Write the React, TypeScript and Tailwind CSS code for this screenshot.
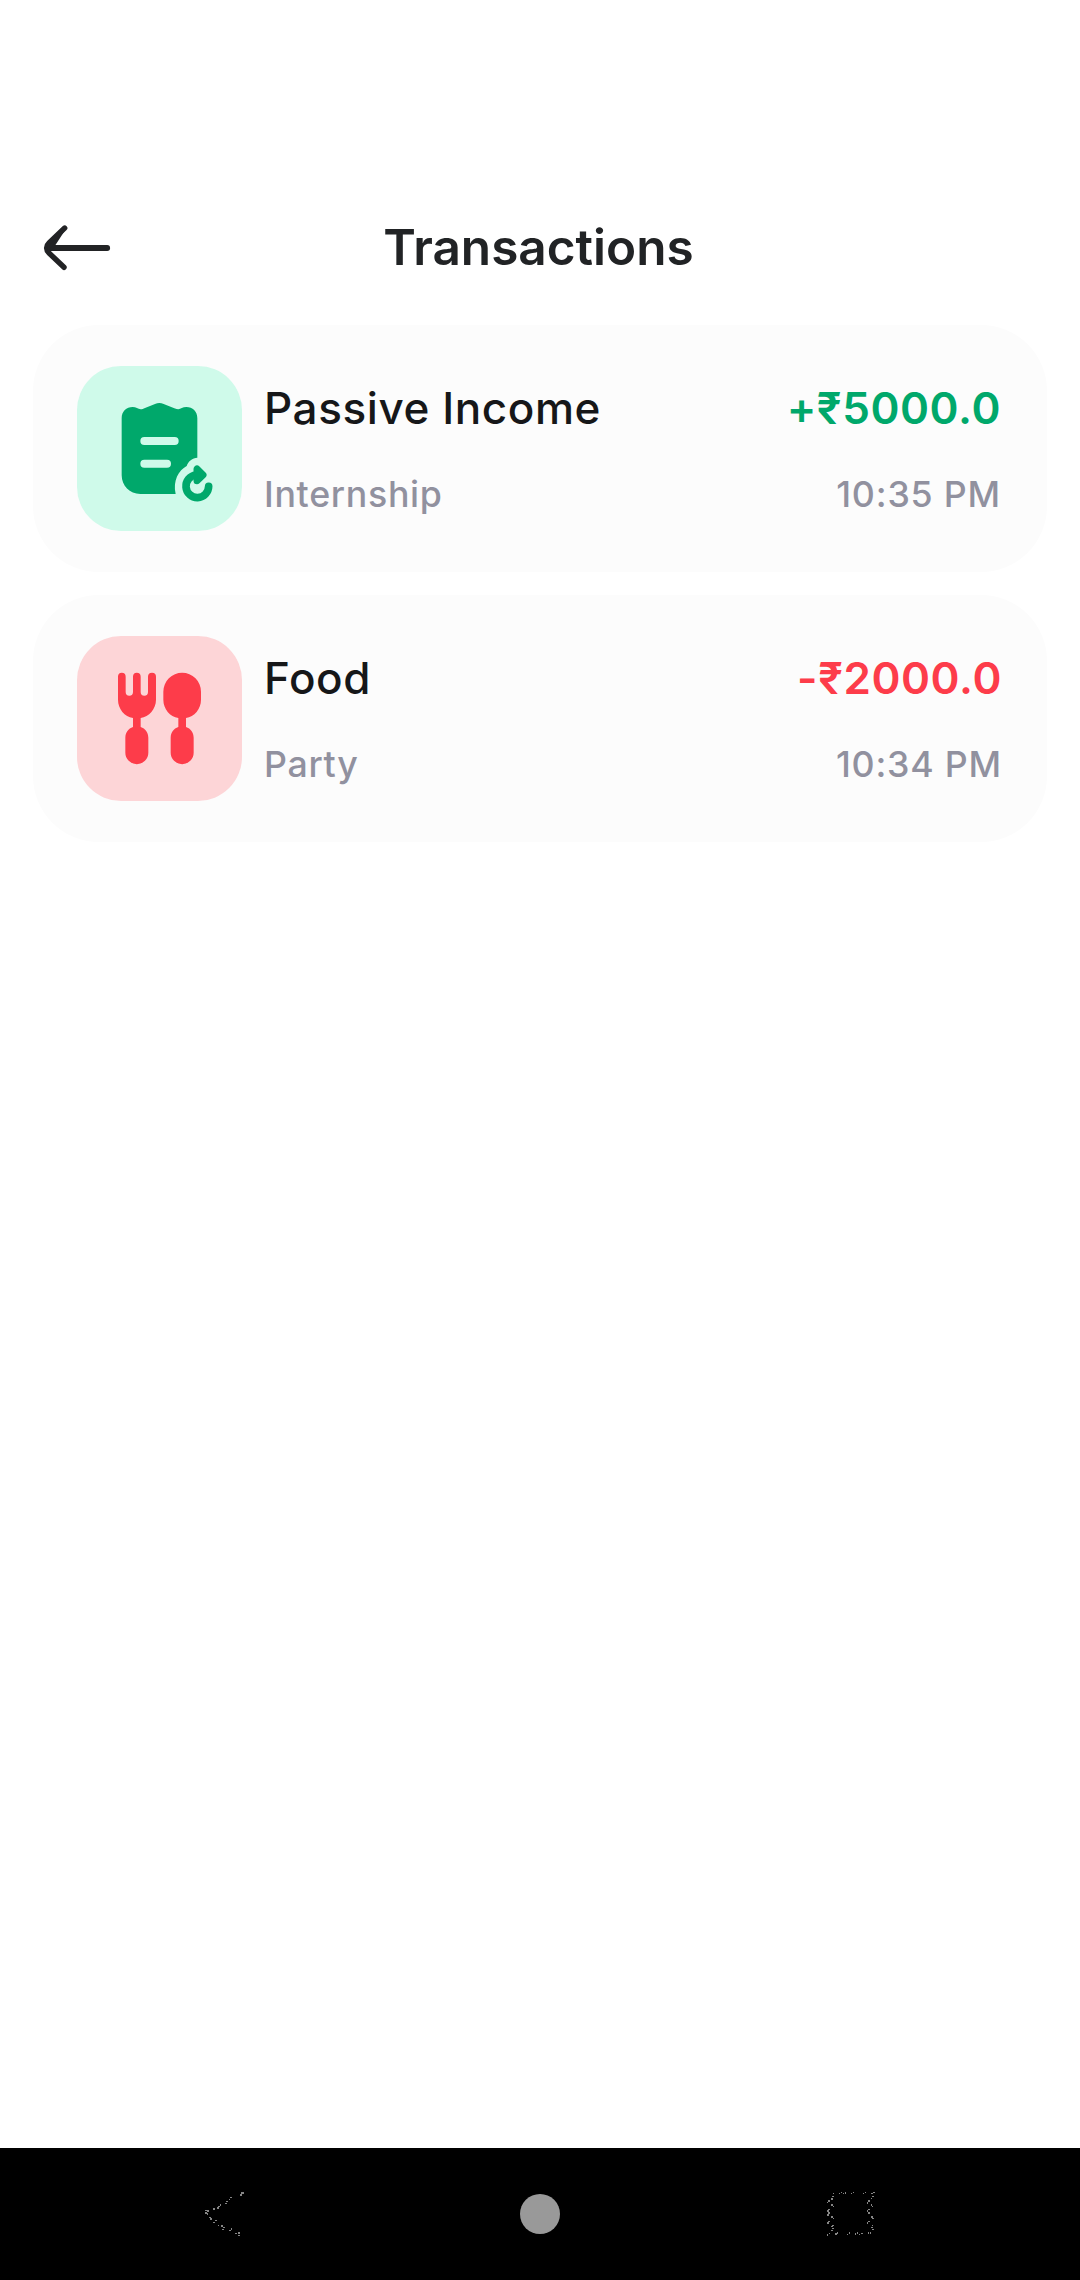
import React from "react";

function BackArrow() {
  return (
    <svg className="h-[50px] w-[72px]" viewBox="0 0 72 50" fill="none" stroke="#222325" strokeLinecap="round" strokeLinejoin="round">
      <path d="M8 25H66.2" strokeWidth="5.8" />
      <path d="M23.7 5L8 20C4.8 23 4.8 27 8 30L23 44.3" strokeWidth="5.4" />
      <path d="M23.7 6L8 21Q6 25 8 28L12 24Z" fill="#222325" strokeWidth="2" />
    </svg>
  );
}

function ReceiptIcon() {
  return (
    <svg className="h-[165px] w-[165px]" viewBox="21 18 495 495" fill="none">
      <path
        d="M155 175C155 154 169 141 188 141C198 141 204 147 212 148C216 148 220 146 225 144L255 132Q268 126 281 132L313 145C318 147 322 148 325 148C332 146 338 141 349 141C368 141 382 154 382 175V293C367 294 355 303 350 318C326 331 308 362 317 402H211C179 402 155 377 155 346Z"
        fill="#00A86B"
      />
      <path d="M223 243H314M223 311H291" stroke="#CFFAEA" strokeWidth="24" strokeLinecap="round" />
      <path d="M378 345A34 34 0 1 0 416 379" stroke="#00A86B" strokeWidth="23" strokeLinecap="round" />
      <path d="M381 327V362L399 345Z" fill="#00A86B" stroke="#00A86B" strokeWidth="21" strokeLinejoin="round" />
    </svg>
  );
}

function CutleryIcon() {
  return (
    <svg className="h-[165px] w-[165px]" viewBox="21 18 495 495" fill="#FD3C4A">
      <path d="M144 140a11.5 11.5 0 0 1 23 0V186a11 11 0 0 0 22 0V140a11.5 11.5 0 0 1 23 0V186a11 11 0 0 0 22 0V140a12 12 0 0 1 24 0V209C258 237 237 260 212 264V291C226 296 235 307 235 323V368a34.5 34.5 0 0 1-69 0V323C166 307 175 296 189 291V264C164 260 144 237 144 209Z" />
      <path d="M280 185a56.5 56.5 0 0 1 113 0V209C393 237 373 260 348 264V291C362 296 371 307 371 323V368a34.5 34.5 0 0 1-69 0V323C302 307 311 296 325 291V264C300 260 280 237 280 209Z" />
    </svg>
  );
}

type Transaction = {
  category: string;
  note: string;
  amount: string;
  time: string;
  tile: string;
  amountStyle: string;
  inset: string;
  icon: React.ReactNode;
};

const transactions: Transaction[] = [
  {
    category: "Passive Income",
    note: "Internship",
    amount: "+₹5000.0",
    time: "10:35 PM",
    tile: "bg-[#CFFAEA]",
    amountStyle: "text-[#00A86B]",
    inset: "pr-[46px]",
    icon: <ReceiptIcon />,
  },
  {
    category: "Food",
    note: "Party",
    amount: "-₹2000.0",
    time: "10:34 PM",
    tile: "bg-[#FDD5D7]",
    amountStyle: "text-[#FD3C4A]",
    inset: "pr-[45px]",
    icon: <CutleryIcon />,
  },
];

function TransactionCard({ item }: { item: Transaction }) {
  return (
    <li className={`flex h-[247px] items-center rounded-[66px] bg-[#FCFCFC] pl-[44px] ${item.inset}`}>
      <div className={`h-[165px] w-[165px] shrink-0 overflow-hidden rounded-[44px] ${item.tile}`}>{item.icon}</div>
      <div className="ml-[22px] flex flex-1 flex-col gap-[37px] whitespace-nowrap">
        <div className="flex justify-between text-[44px] leading-[54px] tracking-[0.58px]">
          <span className="font-medium text-[#161719]">{item.category}</span>
          <span className={`font-semibold ${item.amountStyle}`}>{item.amount}</span>
        </div>
        <div className="flex justify-between text-[35.75px] leading-[44px] font-medium tracking-[0.6875px] text-[#91919F]">
          <span>{item.note}</span>
          <span className="tracking-[0.8px]">{item.time}</span>
        </div>
      </div>
    </li>
  );
}

const backDots = [
  [153, 157, 9], [151, 163, 5], [119, 171, 8], [116, 176, 5], [107, 182, 7], [105, 188, 5],
  [89, 193, 4], [84, 197, 6], [81, 202, 6], [69, 205, 6], [46, 210, 5], [52, 211, 5],
  [46, 217, 6], [51, 220, 4], [57, 231, 5], [61, 235, 5], [76, 240, 5], [70, 245, 6],
  [85, 254, 3], [94, 256, 5], [99, 260, 6], [97, 267, 4], [122, 265, 5], [118, 270, 6],
  [135, 279, 5], [144, 277, 5], [143, 284, 6],
];

const recentDots = [
  [69, 159, 3], [87, 159, 3], [93, 156, 4], [99, 159, 3], [104, 157, 4], [123, 159, 3],
  [129, 156, 4], [160, 159, 3], [165, 156, 4], [184, 158, 4], [190, 156, 4], [67, 168, 5],
  [64, 175, 4], [186, 168, 5], [183, 173, 3], [55, 181, 5], [51, 185, 4], [175, 181, 5],
  [171, 187, 4], [64, 193, 4], [68, 197, 4], [183, 193, 4], [187, 197, 3], [55, 206, 5],
  [51, 211, 5], [55, 217, 5], [51, 223, 5], [175, 206, 5], [171, 211, 4], [175, 217, 4],
  [64, 229, 5], [68, 233, 3], [184, 229, 5], [187, 234, 4], [55, 242, 5], [51, 247, 5],
  [175, 242, 4], [171, 247, 4], [67, 254, 4], [64, 258, 4], [67, 264, 4], [64, 269, 5],
  [187, 254, 3], [184, 261, 4], [187, 267, 4], [51, 283, 4], [56, 278, 3], [76, 280, 4],
  [80, 277, 5], [111, 282, 4], [116, 277, 5], [135, 280, 4], [140, 277, 5], [147, 282, 4],
  [152, 278, 6], [175, 277, 3], [180, 277, 3],
];

function DottedGlyph({ dots }: { dots: number[][] }) {
  return (
    <svg className="h-[132px] w-[80px]" viewBox="0 24 240 396" fill="#858585" shapeRendering="crispEdges">
      {dots.map(([x, y, w], i) => (
        <rect key={i} x={x} y={y} width={w} height={4} />
      ))}
    </svg>
  );
}

export default function App() {
  return (
    <div className="flex h-[2280px] w-[1080px] flex-col bg-white font-['Inter',sans-serif]">
      <header className="mt-[171px] grid h-[154px] grid-cols-[110px_1fr_110px] items-center">
        <button aria-label="Back" className="ml-[41px] w-[72px]">
          <BackArrow />
        </button>
        <h1 className="pr-[3px] pb-[2px] text-center text-[49.5px] leading-[60px] font-semibold text-[#212325]">Transactions</h1>
      </header>
      <ul className="flex flex-1 flex-col gap-[23px] px-[33px]">
        {transactions.map((item) => (
          <TransactionCard key={item.category} item={item} />
        ))}
      </ul>
      <nav className="flex h-[132px] items-center justify-between bg-black px-[190px]">
        <DottedGlyph dots={backDots} />
        <div className="h-10 w-10 rounded-full bg-[#999999]" />
        <DottedGlyph dots={recentDots} />
      </nav>
    </div>
  );
}
